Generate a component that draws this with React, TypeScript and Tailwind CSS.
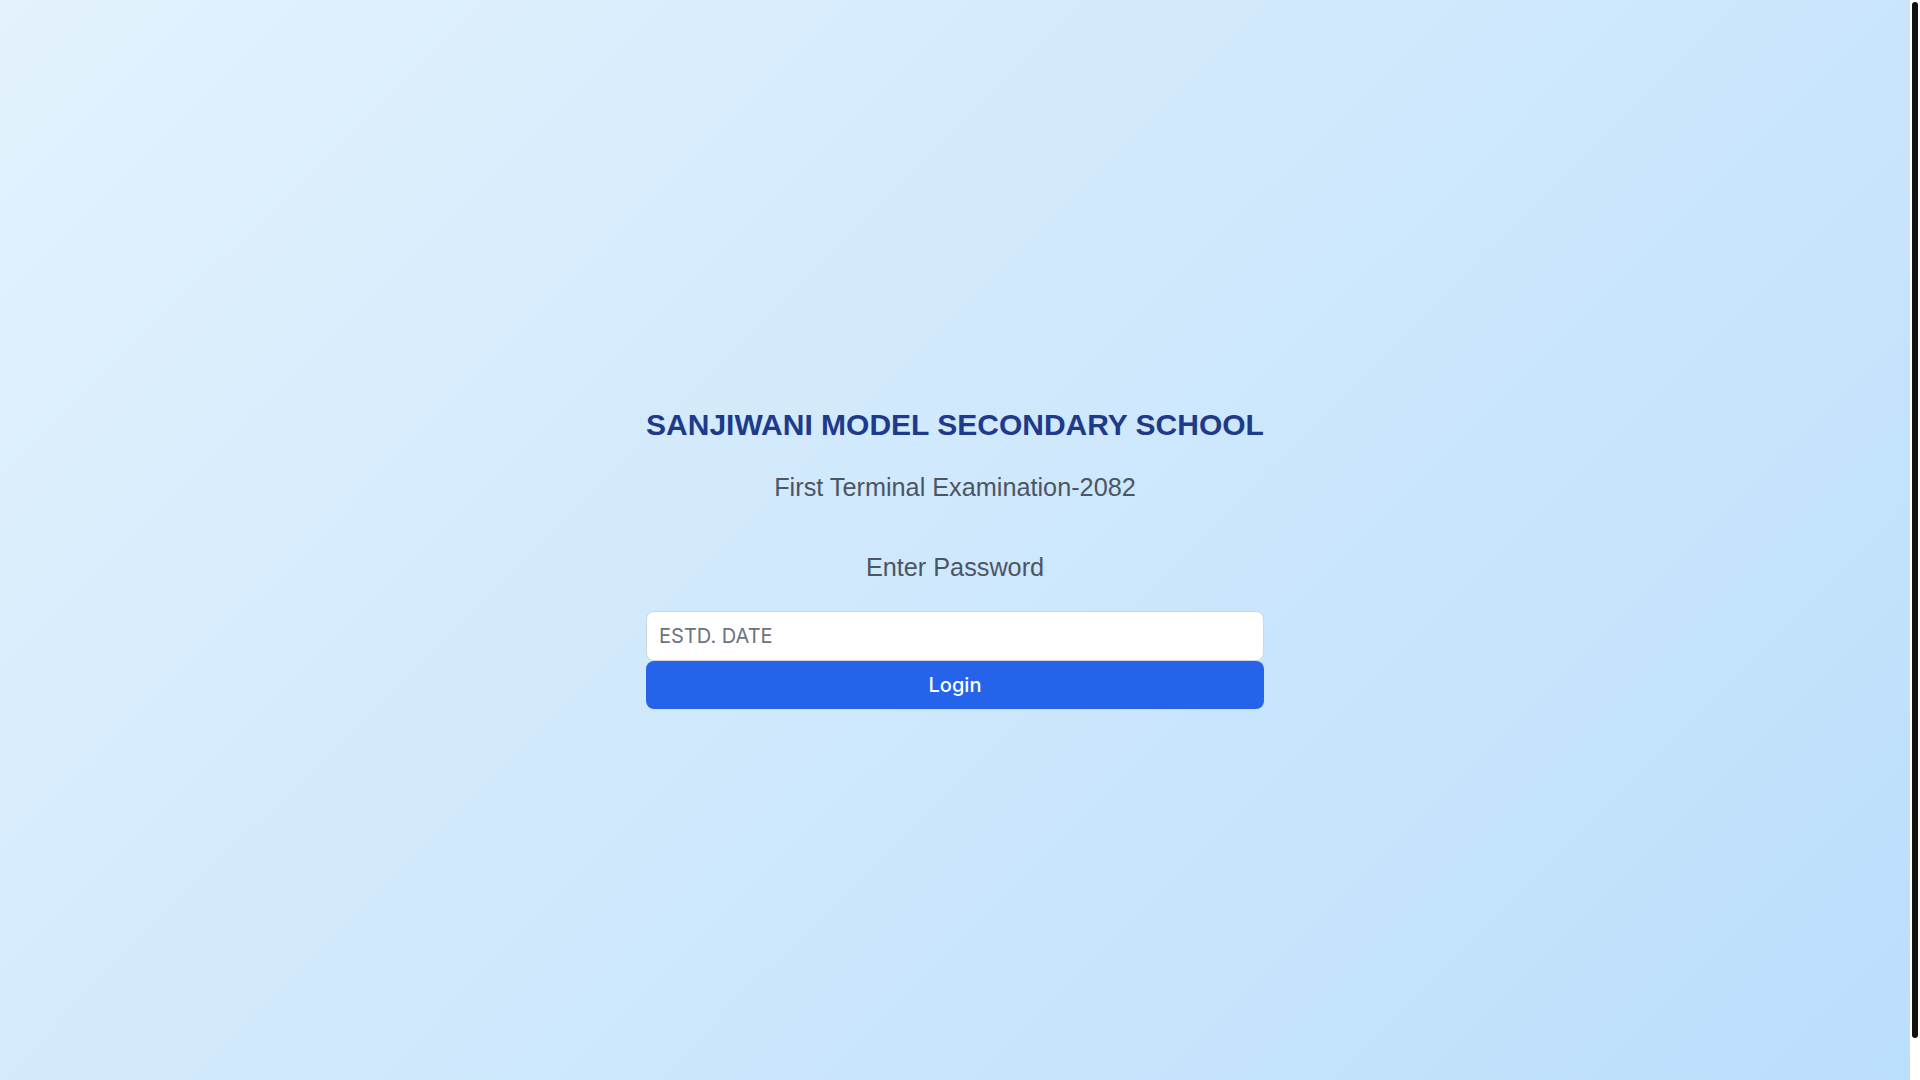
import { useState } from 'react';

export default function App() {
  const [password, setPassword] = useState('');

  return (
    <div className="flex h-screen overflow-hidden bg-white">
      <main className="flex-1 min-w-0 pt-[35px] flex items-center justify-center bg-[linear-gradient(135deg,#e3f2fd,#bbdefb)]">
        <div className="flex flex-col items-center text-center">
          <h1 className="text-3xl font-bold text-[#1e3a8a] font-['Liberation_Sans',Arial,sans-serif]">
            SANJIWANI MODEL SECONDARY SCHOOL
          </h1>
          <p className="mt-7 text-[25.25px] leading-8 text-[#4b5563] font-['Liberation_Sans',Arial,sans-serif]">
            First Terminal Examination-2082
          </p>
          <h2 className="mt-12 text-[25.25px] leading-8 text-[#4b5563] font-['Liberation_Sans',Arial,sans-serif]">
            Enter Password
          </h2>
          <form
            className="mt-[28px] w-full flex flex-col"
            onSubmit={(e) => e.preventDefault()}
          >
            <input
              type="password"
              value={password}
              onChange={(e) => setPassword(e.target.value)}
              placeholder="ESTD. DATE"
              className="w-full rounded-lg border border-[#d1d5db] bg-white px-3 py-2.5 text-xl text-gray-900 placeholder:text-[#6b7280] outline-none font-['Inter',sans-serif]"
            />
            <button
              type="submit"
              className="w-full rounded-lg bg-[#2563eb] py-2.5 text-xl font-medium text-white font-['Inter',sans-serif]"
            >
              Login
            </button>
          </form>
        </div>
      </main>
      {/* scrollbar track */}
      <div className="w-[10px] shrink-0 bg-white pt-[2px]">
        <div className="mx-auto h-[1036px] w-[6px] rounded-[3px] bg-[#111111]" />
      </div>
    </div>
  );
}
